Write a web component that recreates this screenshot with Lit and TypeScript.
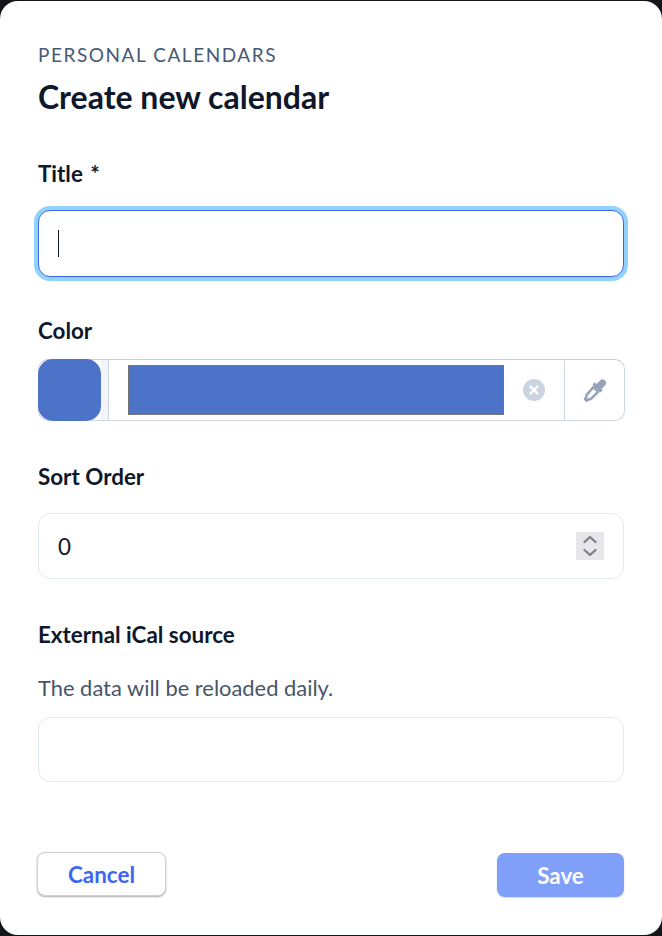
import { LitElement, html, css } from "lit";
import { customElement } from "lit/decorators.js";

@customElement("app-root")
export class AppRoot extends LitElement {
  static styles = css`
    :host { display: block; width: 662px; height: 936px; background: #14161c; font-family: Lato, sans-serif; color: #111a2e; overflow: hidden; }
    .card { box-sizing: border-box; height: 934px; margin-top: 1px; background: #fff; border-radius: 18px; padding: 44px 38px 0; display: flex; flex-direction: column; }
    .eyebrow { font-size: 19px; line-height: 20px; letter-spacing: 1.55px; color: #475a75; }
    h1 { margin: 14px 0 0; font-size: 32px; line-height: 36px; font-weight: 700; color: #0f172a; }
    label { display: block; font-size: 22.4px; line-height: 24px; font-weight: 700; color: #0f172a; }
    .star { font-weight: 700; margin-left: 2px; }
    .title-label { margin-top: 47px; }
    .input { box-sizing: border-box; height: 66px; border: 1px solid #e2e8f0; border-radius: 12px; background: #fff; display: flex; align-items: center; padding: 0 19px; font-size: 22.4px; color: #0f172a; }
    .focus { margin-top: 24px; height: 67px; border-color: #3b66f5; box-shadow: 0 0 0 4px #93d2fd; }
    .caret { width: 1px; height: 27px; background: #0f172a; }
    .color-label { margin-top: 42px; }
    .color { box-sizing: border-box; margin: 16px -1px 0 0; height: 62px; border: 1px solid #cfd5e2; border-top-color: #c8ccd4; border-radius: 10px; display: flex; align-items: stretch; }
    .swatch { width: 63px; margin: -1px 0 -1px -1px; background: #4d73c9; border-radius: 15px; }
    .gap { width: 7px; background: #f1f5f9; border-right: 1px solid #cbd5e1; }
    .well { flex: 1; display: flex; align-items: center; padding: 0 19px; }
    .bar { flex: 1; height: 50px; box-sizing: border-box; background: #4d73c9; border: 1px solid #767676; }
    .clear { width: 22px; height: 22px; margin-right: 19px; align-self: center; }
    .pick { width: 59px; border-left: 1px solid #cbd5e1; display: flex; align-items: center; justify-content: center; }
    .sort-label { margin-top: 44px; }
    .sort { margin-top: 24px; justify-content: space-between; padding-right: 19px; height: 66px; }
    .spin { width: 28px; height: 28px; background: #e6e6eb; display: flex; align-items: center; justify-content: center; }
    .ical-label { margin-top: 44px; }
    .hint { margin: 29px 0 0; font-size: 21.9px; line-height: 24px; color: #475569; }
    .ical { margin-top: 17px; height: 65px; }
    .actions { display: flex; justify-content: space-between; margin-top: 70px; }
    button { font-family: inherit; font-size: 22.4px; font-weight: 700; height: 44px; border-radius: 8px; padding: 0; }
    .cancel { width: 129px; margin-left: -1px; background: #fff; color: #3b66f5; border: 1px solid #cbd0da; box-shadow: 0 1px 2px rgba(15,23,42,.35); }
    .save { width: 127px; margin-top: 1px; background: #7f9ff8; color: #fff; border: 0; box-shadow: 0 1px 2px rgba(15,23,42,.15); }
    svg { display: block; }
  `;

  render() {
    return html`
      <div class="card">
        <div class="eyebrow">PERSONAL CALENDARS</div>
        <h1>Create new calendar</h1>
        <label class="title-label">Title <span class="star">*</span></label>
        <div class="input focus"><span class="caret"></span></div>
        <label class="color-label">Color</label>
        <div class="color">
          <div class="swatch"></div>
          <div class="gap"></div>
          <div class="well"><div class="bar"></div></div>
          <svg class="clear" viewBox="0 0 22 22">
            <circle cx="11" cy="11" r="11" fill="#cbd5e1"/>
            <path d="M7.600 7.600l6.800 6.800M14.400 7.600l-6.800 6.800" stroke="#fff" stroke-width="2.400" stroke-linecap="round"/>
          </svg>
          <div class="pick">
            <svg width="24" height="24" viewBox="0 0 24 24" fill="none">
              <path d="M13.500 6l3.500-3.500a3.500 3.500 0 0 1 5 5L18.500 11l1.200 1.200-2.200 2.200-8-8 2.200-2.200z" fill="#94a3b8"/>
              <path d="M10.500 9l4.700 4.700-6.700 6.700c-.8.800-1.800 1-2.800 1l-2.200 1.200-1.400-1.400 1.200-2.200c0-1 .2-2 1-2.800z" stroke="#94a3b8" stroke-width="2.600" stroke-linejoin="round"/>
            </svg>
          </div>
        </div>
        <label class="sort-label">Sort Order</label>
        <div class="input sort">
          <span>0</span>
          <div class="spin">
            <svg width="14" height="22" viewBox="0 0 14 22" fill="none" stroke="#7d7d88" stroke-width="2.200" stroke-linecap="round" stroke-linejoin="round">
              <path d="M1.500 7L7 2 12.500 7M1.500 15L7 20 12.500 15"/>
            </svg>
          </div>
        </div>
        <label class="ical-label">External iCal source</label>
        <p class="hint">The data will be reloaded daily.</p>
        <div class="input ical"></div>
        <div class="actions">
          <button class="cancel">Cancel</button>
          <button class="save">Save</button>
        </div>
      </div>
    `;
  }
}
